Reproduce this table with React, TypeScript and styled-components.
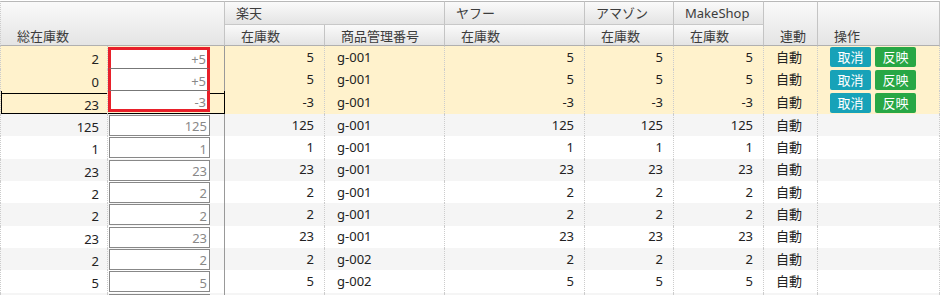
import React from 'react';
import styled, { createGlobalStyle, css } from 'styled-components';

const GlobalStyle = createGlobalStyle`
  * { box-sizing: border-box; }
  body {
    margin: 0;
    background: #fff;
    font-family: "Noto Sans", "Noto Sans CJK JP", sans-serif;
  }
`;

type Tone = 'edit' | 'odd' | 'even';
type EditPos = 'first' | 'mid' | 'last';

interface StockRow {
  total: string;
  input: string;
  rakuten: string;
  code: string;
  yahoo: string;
  amazon: string;
  makeshop: string;
  sync: string;
  edit?: EditPos;
  selected?: boolean;
}

const rows: StockRow[] = [
  { total: '2', input: '+5', rakuten: '5', code: 'g-001', yahoo: '5', amazon: '5', makeshop: '5', sync: '自動', edit: 'first' },
  { total: '0', input: '+5', rakuten: '5', code: 'g-001', yahoo: '5', amazon: '5', makeshop: '5', sync: '自動', edit: 'mid' },
  { total: '23', input: '-3', rakuten: '-3', code: 'g-001', yahoo: '-3', amazon: '-3', makeshop: '-3', sync: '自動', edit: 'last', selected: true },
  { total: '125', input: '125', rakuten: '125', code: 'g-001', yahoo: '125', amazon: '125', makeshop: '125', sync: '自動' },
  { total: '1', input: '1', rakuten: '1', code: 'g-001', yahoo: '1', amazon: '1', makeshop: '1', sync: '自動' },
  { total: '23', input: '23', rakuten: '23', code: 'g-001', yahoo: '23', amazon: '23', makeshop: '23', sync: '自動' },
  { total: '2', input: '2', rakuten: '2', code: 'g-001', yahoo: '2', amazon: '2', makeshop: '2', sync: '自動' },
  { total: '2', input: '2', rakuten: '2', code: 'g-001', yahoo: '2', amazon: '2', makeshop: '2', sync: '自動' },
  { total: '23', input: '23', rakuten: '23', code: 'g-001', yahoo: '23', amazon: '23', makeshop: '23', sync: '自動' },
  { total: '2', input: '2', rakuten: '2', code: 'g-002', yahoo: '2', amazon: '2', makeshop: '2', sync: '自動' },
  { total: '5', input: '5', rakuten: '5', code: 'g-002', yahoo: '5', amazon: '5', makeshop: '5', sync: '自動' },
  // next row only peeks in at the bottom edge
  { total: '', input: '', rakuten: '', code: '', yahoo: '', amazon: '', makeshop: '', sync: '' },
];

const widths = [108, 117, 100, 120, 140, 89, 90, 54, 122];

const Page = styled.div`
  padding-top: 1px;
  width: 940px;
  height: 295px;
  overflow: hidden;
`;

const Table = styled.table`
  width: 940px;
  table-layout: fixed;
  border-collapse: separate;
  border-spacing: 0;
  font-size: 13px;
  color: #222;
`;

const Col = styled.col<{ $w: number }>`
  width: ${({ $w }) => $w}px;
`;

const Th = styled.th<{ $group?: boolean; $top?: boolean; $first?: boolean }>`
  background: linear-gradient(#fafafa, #e4e4e4);
  border-right: 1px solid #c4c4c4;
  border-bottom: 1px solid ${({ $group }) => ($group ? '#c8c8c8' : '#b0b0b0')};
  border-top: ${({ $top }) => ($top ? '1px solid #b8b8b8' : 'none')};
  border-left: ${({ $first }) => ($first ? '1px dotted #ccc' : 'none')};
  font-weight: normal;
  color: #3c3c3c;
  text-align: left;
  white-space: nowrap;
  line-height: 17px;
  padding: 0 0 0 ${({ $group }) => ($group ? 11 : 16)}px;
  vertical-align: ${({ $group }) => ($group ? 'middle' : 'bottom')};
  height: ${({ $group }) => ($group ? '24px' : '21px')};
`;

const toneBg: Record<Tone, string> = {
  edit: '#fff2cc',
  odd: '#f5f5f5',
  even: '#ffffff',
};

const Tr = styled.tr<{ $tone: Tone }>`
  background: ${({ $tone }) => toneBg[$tone]};
`;

const Td = styled.td<{ $align?: 'left' | 'right'; $solid?: boolean; $first?: boolean; $tall?: boolean }>`
  height: ${({ $tall }) => ($tall ? '22.67px' : '22.33px')};
  padding: 0 ${({ $align }) => ($align === 'left' ? '0 0 12px' : '10px 0 0')};
  text-align: ${({ $align }) => $align || 'right'};
  border-right: 1px ${({ $solid }) => ($solid ? 'solid #999' : 'dotted #ccc')};
  border-left: ${({ $first }) => ($first ? '1px dotted #ccc' : 'none')};
  white-space: nowrap;
  vertical-align: middle;
  line-height: 17px;
`;

const TotalCell = styled(Td)<{ $selected?: boolean }>`
  padding: 5px 8px 0 0;
  ${({ $selected }) =>
    $selected &&
    css`
      box-shadow: inset 1px 0 0 #000, inset 0 2px 0 #fff2cc, inset 0 3px 0 #000, inset 0 -1px 0 #000;
    `}
`;

const InputCell = styled(Td)<{ $selected?: boolean; $edit?: EditPos }>`
  padding: ${({ $edit }) => ($edit === 'first' ? '1px 0 0 0' : '0')};
  vertical-align: top;
  ${({ $selected }) =>
    $selected &&
    css`
      border-right: 1px solid #000;
      box-shadow: inset 0 2px 0 #fff2cc, inset 0 3px 0 #000, inset 0 -1px 0 #000;
    `}
`;

const inputHeight: Record<EditPos, string> = {
  first: '21.67px',
  mid: '22.67px',
  last: '20.67px',
};

const CountInput = styled.input<{ $edit?: EditPos }>`
  display: block;
  font: inherit;
  font-size: 13px;
  color: #888;
  text-align: right;
  background: #fff;
  outline: none;
  border-radius: 0;
  ${({ $edit }) =>
    $edit
      ? css`
          width: 102px;
          height: ${inputHeight[$edit]};
          margin: 0;
          padding: ${$edit === 'first' ? '1px' : '3px'} 1px 0 0;
          border-style: solid;
          border-color: #e8202a;
          border-width: ${$edit === 'first' ? '3px' : '0'} 3px 0 3px;
          border-bottom: ${$edit === 'last' ? '3px solid #e8202a' : '1px solid #777'};
        `
      : css`
          width: 101px;
          height: 21px;
          margin: 1px 0 0 1px;
          padding: 2px 2px 0 0;
          border: 1px solid #888;
        `}
`;

const Actions = styled.div`
  display: flex;
  gap: 4px;
`;

const ActionButton = styled.button<{ $kind: 'cancel' | 'apply' }>`
  width: 41px;
  height: 20px;
  padding: 0;
  border: none;
  border-radius: 2px;
  font: inherit;
  font-size: 13px;
  line-height: 20px;
  color: #fff;
  background: ${({ $kind }) => ($kind === 'cancel' ? '#17a2b8' : '#28a745')};
`;

export default function App() {
  return (
    <Page>
      <GlobalStyle />
      <Table>
        <colgroup>
          {widths.map((w, i) => (
            <Col key={i} $w={w} />
          ))}
        </colgroup>
        <thead>
          <tr>
            <Th colSpan={2} rowSpan={2} $top $first>総在庫数</Th>
            <Th colSpan={2} $group $top>楽天</Th>
            <Th $group $top>ヤフー</Th>
            <Th $group $top>アマゾン</Th>
            <Th $group $top>MakeShop</Th>
            <Th rowSpan={2} $top>連動</Th>
            <Th rowSpan={2} $top>操作</Th>
          </tr>
          <tr>
            <Th>在庫数</Th>
            <Th>商品管理番号</Th>
            <Th>在庫数</Th>
            <Th>在庫数</Th>
            <Th>在庫数</Th>
          </tr>
        </thead>
        <tbody>
          {rows.map((r, i) => {
            const tone: Tone = r.edit ? 'edit' : i % 2 === 1 ? 'odd' : 'even';
            const tall = !!r.edit;
            return (
              <Tr key={i} $tone={tone}>
                <TotalCell $first $tall={tall} $selected={r.selected}>{r.total}</TotalCell>
                <InputCell $solid $tall={tall} $edit={r.edit} $selected={r.selected}>
                  <CountInput $edit={r.edit} defaultValue={r.input} />
                </InputCell>
                <Td $tall={tall}>{r.rakuten}</Td>
                <Td $tall={tall} $align="left">{r.code}</Td>
                <Td $tall={tall}>{r.yahoo}</Td>
                <Td $tall={tall}>{r.amazon}</Td>
                <Td $tall={tall}>{r.makeshop}</Td>
                <Td $tall={tall} $align="left">{r.sync}</Td>
                <Td $tall={tall} $align="left">
                  {r.edit && (
                    <Actions>
                      <ActionButton $kind="cancel">取消</ActionButton>
                      <ActionButton $kind="apply">反映</ActionButton>
                    </Actions>
                  )}
                </Td>
              </Tr>
            );
          })}
        </tbody>
      </Table>
    </Page>
  );
}
